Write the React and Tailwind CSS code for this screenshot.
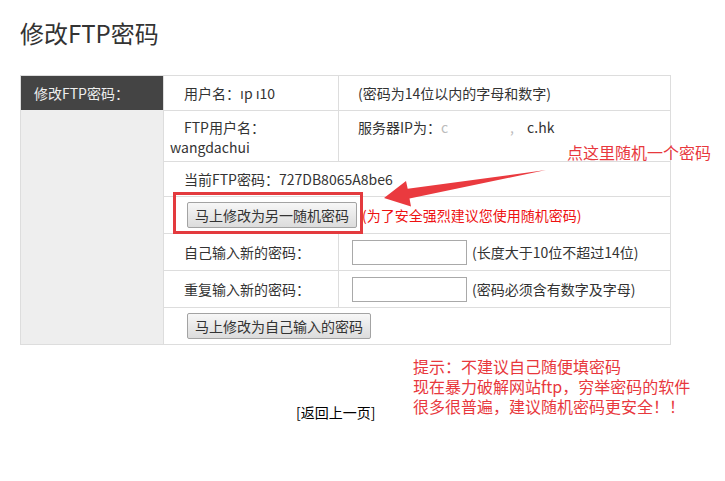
import React from 'react'

const font = { fontFamily: '"Noto Sans CJK SC", "Liberation Sans", sans-serif' }

function Btn({ children }) {
  return (
    <button
      type="button"
      className="h-[26px] px-[7px] text-[14px] text-[#333] border border-[#a3a3a3] rounded-[2px] bg-gradient-to-b from-[#f7f7f7] to-[#dcdcdc] leading-none"
    >
      {children}
    </button>
  )
}

function PwdInput() {
  return <input type="password" className="w-[115px] h-[25px] border border-[#a9a9a9] bg-white" />
}

const App = () => {
  return (
    <div className="relative w-[725px] h-[481px] bg-white text-[#333] overflow-hidden" style={font}>
      <div className="pl-[20px] pt-[15px]">
        <h1 className="text-[24px] leading-[36px] text-[#333]">修改FTP密码</h1>

        <div className="mt-[24px] w-[651px] flex border border-[#dddddd] text-[14px]">
          {/* left column */}
          <div className="w-[143px] flex flex-col bg-[#eeeeee] border-r border-[#dddddd]">
            <div className="h-[34px] bg-[#444444] text-[#eeeeee] pl-[13px] flex items-center">修改FTP密码：</div>
            <div className="flex-1"></div>
          </div>

          {/* right part */}
          <div className="flex-1 flex flex-col">
            <div className="h-[35px] flex border-b border-[#dddddd]">
              <div className="w-[175px] pl-[20px] flex items-center border-r border-[#dddddd]">用户名：ıp ı10</div>
              <div className="flex-1 pl-[19px] flex items-center">(密码为14位以内的字母和数字)</div>
            </div>
            <div className="h-[51px] flex border-b border-[#dddddd]">
              <div className="w-[175px] pl-[6px] pt-[6px] leading-[20px] border-r border-[#dddddd]">
                <span className="pl-[14px]">FTP用户名：</span>
                <br />
                wangdachui
              </div>
              <div className="flex-1 pl-[19px] pt-[6px] leading-[20px] flex items-start">
                <span>服务器IP为：</span>
                <span className="text-[#bbb]">c</span>
                <span className="w-[79px] pl-[62px] text-[#bbb]">,</span>
                <span>c.hk</span>
              </div>
            </div>
            <div className="h-[35px] pl-[20px] flex items-center border-b border-[#dddddd]">当前FTP密码：727DB8065A8be6</div>
            <div className="h-[37px] pl-[23px] flex items-center border-b border-[#dddddd]">
              <Btn>马上修改为另一随机密码</Btn>
              <span className="ml-[5px] text-[#ee1111]">(为了安全强烈建议您使用随机密码)</span>
            </div>
            <div className="h-[37px] flex border-b border-[#dddddd]">
              <div className="w-[175px] pl-[20px] flex items-center border-r border-[#dddddd]">自己输入新的密码：</div>
              <div className="flex-1 pl-[13px] flex items-center gap-[5px]">
                <PwdInput />
                <span>(长度大于10位不超过14位)</span>
              </div>
            </div>
            <div className="h-[37px] flex border-b border-[#dddddd]">
              <div className="w-[175px] pl-[20px] flex items-center border-r border-[#dddddd]">重复输入新的密码：</div>
              <div className="flex-1 pl-[13px] flex items-center gap-[5px]">
                <PwdInput />
                <span>(密码必须含有数字及字母)</span>
              </div>
            </div>
            <div className="h-[36px] pl-[23px] flex items-center">
              <Btn>马上修改为自己输入的密码</Btn>
            </div>
          </div>
        </div>

        <div className="mt-[57px] ml-[276px] text-[14px] leading-[20px] text-black">[返回上一页]</div>
      </div>

      {/* annotations drawn over the screenshot */}
      <div className="absolute left-[173px] top-[192px] w-[190px] h-[42px] border-[3px] border-[#e33a3e]"></div>
      <svg className="absolute left-0 top-0" width="725" height="481" viewBox="0 0 725 481">
        <polygon
          points="384,198 406,181 407.7,188.8 546,170 409.5,198.6 411,206.5"
          fill="#ea3a3f"
        />
      </svg>
      <div className="absolute left-[567px] top-[142px] text-[16px] leading-[20px] text-[#e8383d]">点这里随机一个密码</div>
      <div className="absolute left-[413px] top-[356px] text-[16px] leading-[20px] text-[#e8383d]">
        <div>提示：不建议自己随便填密码</div>
        <div>现在暴力破解网站ftp，穷举密码的软件</div>
        <div>很多很普遍，建议随机密码更安全！！</div>
      </div>
    </div>
  )
}

export default App
